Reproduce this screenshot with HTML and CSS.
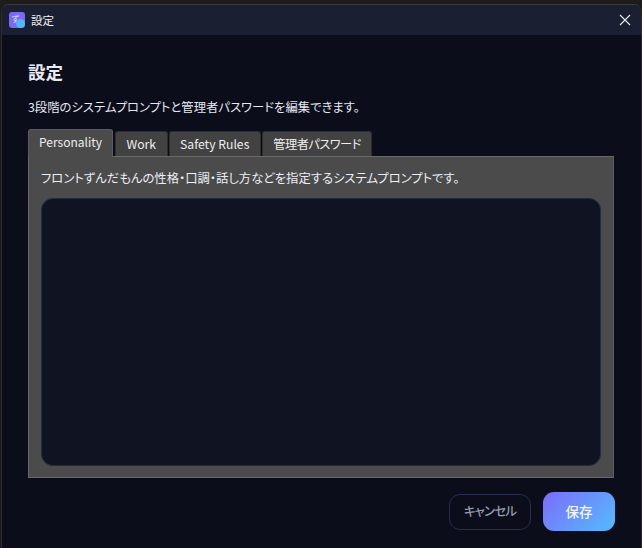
FILE: index.html
```html
<!DOCTYPE html>
<html lang="ja">
<head>
<meta charset="UTF-8" />
<title>設定</title>
<link rel="stylesheet" href="styles.css">
</head>
<body>
<div class="window">
  <div class="titlebar">
    <div class="app-icon"><span class="app-icon-letter">ず</span><span class="app-icon-dot"></span></div>
    <div class="titlebar-text">設定</div>
    <svg class="close-icon" width="12" height="12" viewBox="0 0 12 12" aria-label="Close">
      <path d="M1 1 L11 11 M11 1 L1 11" stroke="#e8e8ec" stroke-width="1.1" fill="none" />
    </svg>
  </div>
  <div class="content">
    <h1 class="heading">設定</h1>
    <p class="subtitle">3段階のシステムプロンプトと管理者パスワードを編集できます。</p>
    <div class="tabs">
      <button class="tab active">Personality</button>
      <button class="tab">Work</button>
      <button class="tab">Safety Rules</button>
      <button class="tab tab-jp">管理者パスワード</button>
    </div>
    <div class="panel">
      <p class="panel-label">フロントずんだもんの性格・口調・話し方などを指定するシステムプロンプトです。</p>
      <textarea class="prompt-input"></textarea>
    </div>
    <div class="actions">
      <button class="btn-cancel">キャンセル</button>
      <button class="btn-save">保存</button>
    </div>
  </div>
</div>
</body>
</html>
```

FILE: styles.css
```css
:root {
  --font-family: "Noto Sans CJK JP", "Liberation Sans", sans-serif;
  --win-bg: #0b0d1a;
  --title-bg: #1a2032;
  --panel-bg: #4b4b4b;
  --input-bg: #0f1322;
}

* {
  box-sizing: border-box;
}

html,
body {
  height: 100%;
}

body {
  margin: 0;
  padding-top: 4px;
  background: #1c1c1c;
  font-family: var(--font-family);
  font-feature-settings: "palt";
  overflow: hidden;
}

.window {
  height: 544px;
  margin: 0 0 0 1px;
  background: var(--win-bg);
  border-top: 1px solid #3a3a3c;
  border-left: 1px solid #2a2a2c;
  border-right: 1px solid #2a2a2c;
  border-radius: 8px 8px 0 0;
  overflow: hidden;
}

.titlebar {
  height: 30px;
  display: flex;
  align-items: center;
  padding: 0 10px 0 7px;
  background: var(--title-bg);
}

.app-icon {
  position: relative;
  width: 16px;
  height: 16px;
  border-radius: 3px;
  background: #7b68f5;
  overflow: hidden;
  display: flex;
  align-items: center;
  justify-content: center;
}

.app-icon-letter {
  font-size: 8px;
  line-height: 1;
  margin: -2px 3px 0 0;
  color: #e8e4ff;
}

.app-icon-dot {
  position: absolute;
  right: 0;
  bottom: 0;
  width: 9px;
  height: 9px;
  border-radius: 50%;
  background: #4fb8fb;
}

.titlebar-text {
  margin-left: 6px;
  font-size: 11.5px;
  color: #f0f0f0;
}

.close-icon {
  margin-left: auto;
}

.content {
  padding: 24px 27px 0 26px;
}

.heading {
  margin: 0;
  font-size: 17.5px;
  line-height: 26px;
  font-weight: 700;
  color: #e8ebf4;
}

.subtitle {
  margin: 13px 0 0;
  font-size: 12.35px;
  line-height: 18px;
  color: #e4e7ef;
}

.tabs {
  display: flex;
  align-items: flex-end;
  gap: 1px;
  margin-top: 12px;
  height: 28px;
  position: relative;
  z-index: 1;
}

.tab {
  height: 25px;
  padding: 0 10.5px;
  border: 1px solid #2e2e2e;
  border-bottom: none;
  border-radius: 3px 3px 0 0;
  background: #424242;
  color: #eeeeee;
  font-family: var(--font-family);
  font-feature-settings: "palt";
  font-size: 12.2px;
  line-height: 1;
}

.tab-jp {
  letter-spacing: -0.5px;
}

.tab.active {
  height: 28px;
  padding: 0 10px 3px;
  margin-right: 1px;
  margin-bottom: -1px;
  background: var(--panel-bg);
  border-color: #5c5c5c;
  font-size: 12px;
}

.panel {
  height: 322px;
  padding: 0 12px 11px 12px;
  background: var(--panel-bg);
  border: 1px solid #6a6a6a;
  border-right-color: #5c5c5c;
  display: flex;
  flex-direction: column;
}

.panel-label {
  margin: 0;
  height: 41px;
  padding-top: 12px;
  font-size: 12.35px;
  line-height: 18px;
  color: #eceff5;
}

.prompt-input {
  flex: 1;
  display: block;
  width: 100%;
  resize: none;
  background: var(--input-bg);
  border: 1px solid #252b45;
  border-radius: 12px;
  outline: none;
}

.actions {
  display: flex;
  justify-content: flex-end;
  align-items: center;
  gap: 12px;
  margin-top: 14px;
  margin-right: -1px;
}

.btn-cancel {
  width: 82px;
  height: 36px;
  padding: 0 0 2px;
  background: transparent;
  border: 1px solid #272d4a;
  border-radius: 11px;
  color: #969bb2;
  font-family: var(--font-family);
  font-feature-settings: "palt";
  font-size: 12.5px;
  font-weight: 500;
  letter-spacing: -0.9px;
}

.btn-save {
  width: 72px;
  height: 39px;
  padding: 0 0 2px;
  border: none;
  border-radius: 11px;
  background: linear-gradient(135deg, #7c6cfb, #52bcfd);
  color: #f4f6ff;
  font-family: var(--font-family);
  font-size: 13.5px;
  font-weight: 500;
}
```
